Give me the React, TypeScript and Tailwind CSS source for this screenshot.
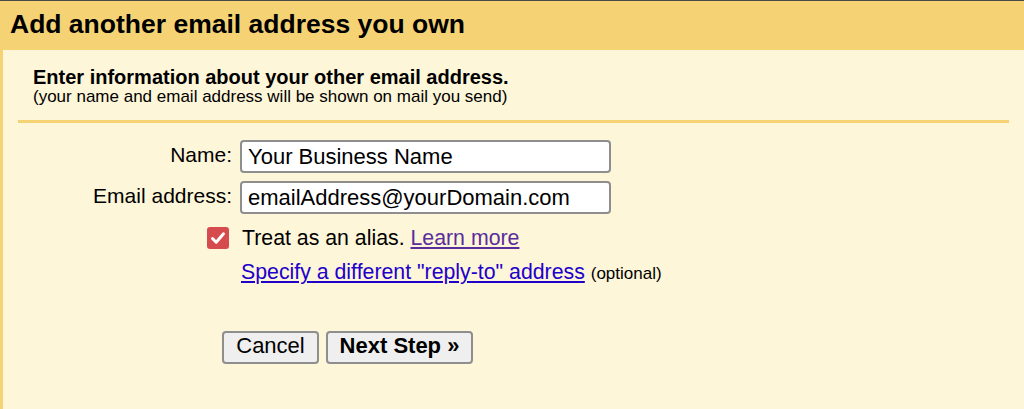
import React from "react";

export default function App() {
  const font = { fontFamily: '"Liberation Sans", Arial, sans-serif' };
  return (
    <div className="w-[1024px] h-[409px] flex flex-col bg-[#fef6d8] text-black" style={font}>
      <div className="h-[1px] bg-[#4a4a4a]" />
      <div className="h-[49px] bg-[#f5d375] flex items-center pl-[10px]">
        <h1 className="text-[26.5px] font-bold leading-none mt-[-3px]">Add another email address you own</h1>
      </div>
      <div className="flex-1 border-l-[3px] border-[#f5d375] pl-[15px] pr-[15px]">
        <div className="pl-[15px] pt-[17px]">
          <div className="text-[20px] font-bold leading-[20px]">Enter information about your other email address.</div>
          <div className="text-[17px] leading-[18px] mt-[1px]">(your name and email address will be shown on mail you send)</div>
        </div>
        <div className="h-[3px] bg-[#f5d375] mt-[14px]" />
        <div className="grid grid-cols-[214px_371px] gap-x-[8px] gap-y-[8px] mt-[17px] items-center">
          <label className="text-right text-[21px] leading-none mt-[-4px]">Name:</label>
          <div className="h-[33px] border-2 border-[#8e8e8e] rounded-[4px] bg-white flex items-center pl-[6px] text-[22px]">
            Your Business Name
          </div>
          <label className="text-right text-[21px] leading-none mt-[-4px]">Email address:</label>
          <div className="h-[33px] border-2 border-[#8e8e8e] rounded-[4px] bg-white flex items-center pl-[6px] text-[22px]">
            emailAddress@yourDomain.com
          </div>
        </div>
        <div className="grid grid-cols-[214px_auto] gap-x-[10px] mt-[12px] items-center">
          <div className="flex justify-end pr-[3px]">
            <div className="w-[22px] h-[22px] rounded-[3px] bg-[#d64b4d] flex items-center justify-center">
              <svg width="16" height="14" viewBox="0 0 16 14">
                <path d="M2.5 7.5 L6.2 11.2 L13.5 2.8" fill="none" stroke="white" strokeWidth="3" strokeLinecap="round" strokeLinejoin="round" />
              </svg>
            </div>
          </div>
          <div className="text-[21.3px] leading-[24px]">
            Treat as an alias.{" "}
            <a href="#" className="text-[#5a2d9c] underline">Learn more</a>
          </div>
        </div>
        <div className="pl-[223px] mt-[10px] text-[21.3px] leading-[24px]">
          <a href="#" className="text-[#2200cc] underline">Specify a different "reply-to" address</a>{" "}
          <span className="text-[17px]">(optional)</span>
        </div>
        <div className="flex gap-[7px] pl-[204px] mt-[45px]">
          <button className="h-[33px] w-[97px] bg-[#efefef] border-2 border-[#8e8e8e] rounded-[4px] text-[22px] leading-none pb-[3px]">
            Cancel
          </button>
          <button className="h-[33px] w-[147px] bg-[#efefef] border-2 border-[#8e8e8e] rounded-[4px] text-[22px] font-bold leading-none pb-[3px]">
            Next Step »
          </button>
        </div>
      </div>
    </div>
  );
}
